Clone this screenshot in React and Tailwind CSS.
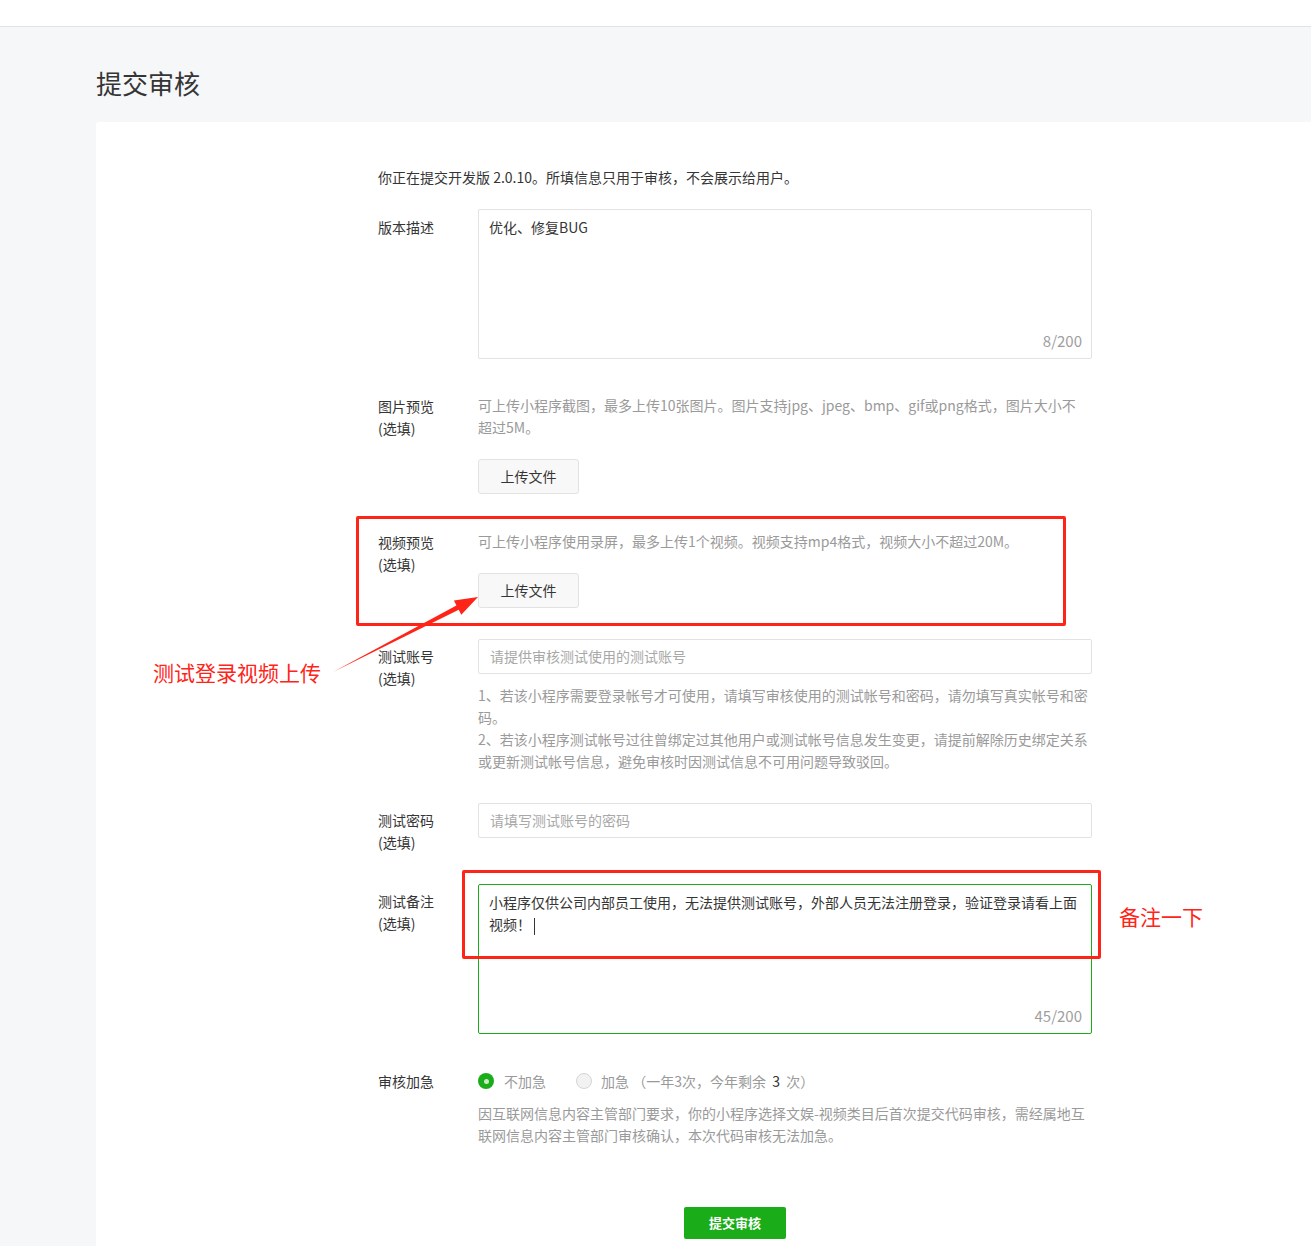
import React from 'react';

const font = { fontFamily: '"Noto Sans CJK SC", "Noto Sans", sans-serif' };

function Label({ children }) {
  return (
    <div className="w-[100px] shrink-0 text-[14px] leading-[22px] text-[#353535]">
      {children}
    </div>
  );
}

function UploadButton() {
  return (
    <button className="w-[101px] h-[35px] rounded-[3px] border border-[#e2e2e2] bg-[#f8f8f8] text-[14px] text-[#353535]">
      上传文件
    </button>
  );
}

export default function App() {
  return (
    <div className="relative min-h-[1246px] bg-[#f6f7f9] overflow-hidden" style={font}>
      {/* top bar */}
      <div className="h-[27px] bg-white border-b border-[#e3e3e3]" />

      <h1 className="pl-[96px] pt-[38px] text-[26px] leading-[36px] text-[#353535]">提交审核</h1>

      <div className="ml-[96px] mt-[21px] bg-white rounded-tl-[3px] pl-[282px] pt-[44px] pb-[40px] min-h-[1130px]">
        <p className="text-[14px] leading-[22px] text-[#353535] whitespace-nowrap">
          你正在提交开发版 2.0.10。所填信息只用于审核，不会展示给用户。
        </p>

        {/* 版本描述 */}
        <div className="flex mt-[21px]">
          <div className="pt-[7px]">
            <Label>版本描述</Label>
          </div>
          <div className="relative w-[614px] h-[150px] border border-[#e2e2e2] rounded-[2px] px-[10px] pt-[6px] text-[14px] leading-[22px] text-[#353535]">
            优化、修复BUG
            <span className="absolute right-[9px] bottom-[6px] text-[15px] text-[#9e9e9e]">8/200</span>
          </div>
        </div>

        {/* 图片预览 */}
        <div className="flex mt-[35px]">
          <div className="pt-px">
            <Label>
              图片预览
              <br />
              (选填)
            </Label>
          </div>
          <div className="w-[614px]">
            <p className="text-[14px] leading-[22px] text-[#9a9a9a] whitespace-nowrap">
              可上传小程序截图，最多上传10张图片。图片支持jpg、jpeg、bmp、gif或png格式，图片大小不
              <br />
              超过5M。
            </p>
            <div className="mt-[21px]">
              <UploadButton />
            </div>
          </div>
        </div>

        {/* 视频预览 */}
        <div className="flex mt-[36px]">
          <div className="pt-px">
            <Label>
              视频预览
              <br />
              (选填)
            </Label>
          </div>
          <div className="w-[614px]">
            <p className="text-[14px] leading-[22px] text-[#9a9a9a] whitespace-nowrap">
              可上传小程序使用录屏，最多上传1个视频。视频支持mp4格式，视频大小不超过20M。
            </p>
            <div className="mt-[21px]">
              <UploadButton />
            </div>
          </div>
        </div>

        {/* 测试账号 */}
        <div className="flex mt-[31px]">
          <div className="pt-[6px]">
            <Label>
              测试账号
              <br />
              (选填)
            </Label>
          </div>
          <div className="w-[614px]">
            <div className="h-[35px] border border-[#e2e2e2] rounded-[2px] px-[11px] flex items-center text-[14px] text-[#a8a8a8]">
              请提供审核测试使用的测试账号
            </div>
            <p className="mt-[10px] text-[14px] leading-[22px] text-[#9a9a9a] whitespace-nowrap">
              1、若该小程序需要登录帐号才可使用，请填写审核使用的测试帐号和密码，请勿填写真实帐号和密
              <br />
              码。
              <br />
              2、若该小程序测试帐号过往曾绑定过其他用户或测试帐号信息发生变更，请提前解除历史绑定关系
              <br />
              或更新测试帐号信息，避免审核时因测试信息不可用问题导致驳回。
            </p>
          </div>
        </div>

        {/* 测试密码 */}
        <div className="flex mt-[31px]">
          <div className="pt-[6px]">
            <Label>
              测试密码
              <br />
              (选填)
            </Label>
          </div>
          <div className="w-[614px]">
            <div className="h-[35px] border border-[#e2e2e2] rounded-[2px] px-[11px] flex items-center text-[14px] text-[#a8a8a8]">
              请填写测试账号的密码
            </div>
          </div>
        </div>

        {/* 测试备注 */}
        <div className="flex mt-[31px]">
          <div className="pt-[6px]">
            <Label>
              测试备注
              <br />
              (选填)
            </Label>
          </div>
          <div className="relative w-[614px] h-[150px] border border-[#1aad19] rounded-[2px] px-[10px] pt-[6px] text-[14px] leading-[22px] text-[#353535] whitespace-nowrap">
            小程序仅供公司内部员工使用，无法提供测试账号，外部人员无法注册登录，验证登录请看上面
            <br />
            视频！
            <span className="inline-block w-px h-[17px] bg-[#353535] align-middle ml-[3px]" />
            <span className="absolute right-[9px] bottom-[6px] text-[15px] text-[#9e9e9e]">45/200</span>
          </div>
        </div>

        {/* 审核加急 */}
        <div className="flex mt-[36px]">
          <Label>审核加急</Label>
          <div className="w-[614px]">
            <div className="flex items-center h-[22px] text-[14px] text-[#9a9a9a]">
              <span className="w-[16px] h-[16px] rounded-full bg-[#1aad19] flex items-center justify-center">
                <span className="w-[5px] h-[5px] rounded-full bg-[#c9e9c6]" />
              </span>
              <span className="ml-[10px]">不加急</span>
              <span className="ml-[30px] w-[16px] h-[16px] rounded-full border border-[#d5d5d5] bg-[#f2f2f2]" />
              <span className="ml-[9px]">
                加急 （一年3次，今年剩余 <span className="text-[#353535]">&nbsp;3&nbsp;</span> 次）
              </span>
            </div>
            <p className="mt-[10px] text-[14px] leading-[22px] text-[#9a9a9a] whitespace-nowrap">
              因互联网信息内容主管部门要求，你的小程序选择文娱-视频类目后首次提交代码审核，需经属地互
              <br />
              联网信息内容主管部门审核确认，本次代码审核无法加急。
            </p>
          </div>
        </div>

        <div className="w-[714px] flex justify-center mt-[61px]">
          <button className="w-[102px] h-[32px] rounded-[2px] bg-[#1aad19] text-white text-[13px] font-bold">
            提交审核
          </button>
        </div>
      </div>

      {/* annotations */}
      <div className="absolute left-[356px] top-[516px] w-[710px] h-[110px] border-[3px] border-[#ff2418] rounded-[2px] pointer-events-none" />
      <div className="absolute left-[462px] top-[870px] w-[639px] h-[89px] border-[3px] border-[#ff2418] rounded-[2px] pointer-events-none" />
      <div className="absolute left-[153px] top-[656px] text-[21px] leading-[32px] text-[#ff2418]">测试登录视频上传</div>
      <div className="absolute left-[1119px] top-[900px] text-[21px] leading-[32px] text-[#ff2418]">备注一下</div>
      <svg className="absolute left-0 top-0 pointer-events-none" width="1311" height="1246">
        <polygon
          points="333,672 458.7,609.8 461.3,614.7 478,597 453.9,600.5 456.4,605.4"
          fill="#ff2418"
        />
      </svg>
    </div>
  );
}
